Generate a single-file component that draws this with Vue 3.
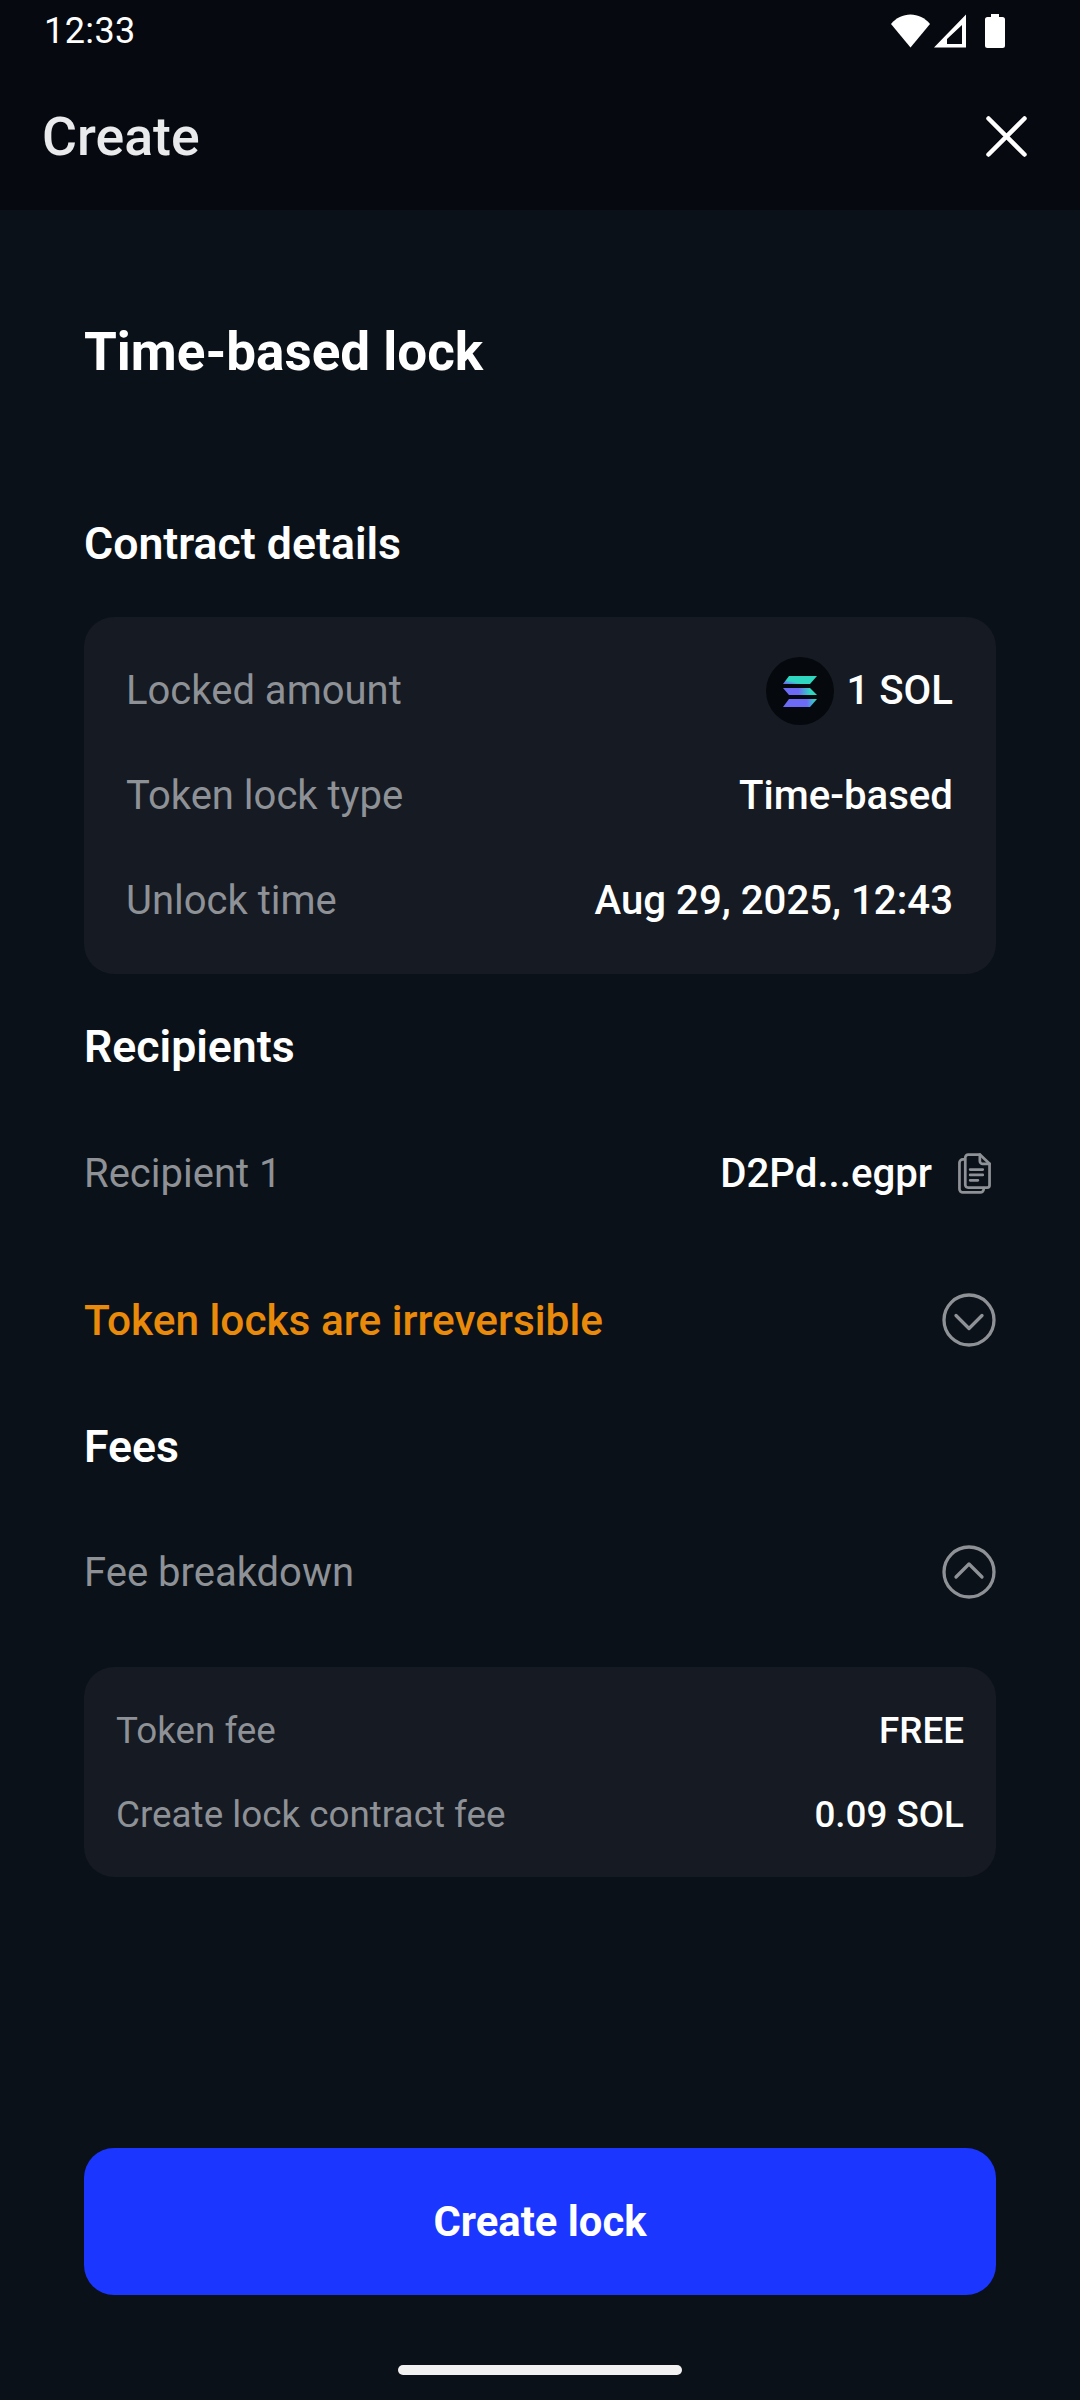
<script setup>
const details = [
  { label: 'Token lock type', value: 'Time-based' },
  { label: 'Unlock time', value: 'Aug 29, 2025, 12:43' },
];

const fees = [
  { label: 'Token fee', value: 'FREE' },
  { label: 'Create lock contract fee', value: '0.09 SOL' },
];
</script>

<template>
  <div class="screen">
    <header class="top">
      <div class="status">
        <span class="clock">12:33</span>
        <div class="status-icons">
          <svg width="39" height="34" viewBox="0 0 39 34"><path d="M19.500 33.500 0 10C5 4 12 .5 19.500 .5S34 4 39 10z" fill="#fff" /></svg>
          <svg class="signal" width="32" height="34" viewBox="0 0 32 34"><path fill-rule="evenodd" d="M32 .5v33H0zM28 11 13 25v5h15z" fill="#fff" /></svg>
          <svg width="20" height="34" viewBox="0 0 20 34"><path d="M6 0h8v3h3.500A2.500 2.500 0 0 1 20 5.500V31.500a2.500 2.500 0 0 1-2.500 2.500H2.500A2.500 2.500 0 0 1 0 31.500V5.500A2.500 2.500 0 0 1 2.500 3H6z" fill="#fff" /></svg>
        </div>
      </div>
      <div class="appbar">
        <span class="appbar-title">Create</span>
        <svg width="41" height="41" viewBox="0 0 41 41"><path d="M2.500 2.500l36 36M38.500 2.500l-36 36" stroke="#fff" stroke-width="4.500" stroke-linecap="round" /></svg>
      </div>
    </header>

    <main class="content">
      <h1>Time-based lock</h1>

      <h2 class="contract-head">Contract details</h2>
      <section class="card contract">
        <div class="row">
          <span class="label">Locked amount</span>
          <span class="value amount">
            <svg class="token" width="68" height="68" viewBox="0 0 68 68">
              <defs>
                <linearGradient id="solTop" x1="0" y1="1" x2="1" y2="0">
                  <stop offset="0.08" stop-color="#6b6bf5" />
                  <stop offset="0.3" stop-color="#2fd7c0" />
                </linearGradient>
                <linearGradient id="solMid" x1="0" y1="0" x2="1" y2="0">
                  <stop offset="0.45" stop-color="#6b6bf5" />
                  <stop offset="0.8" stop-color="#2fd7c0" />
                </linearGradient>
                <linearGradient id="solBot" x1="0" y1="0" x2="1" y2="0">
                  <stop offset="0.7" stop-color="#6b6bf5" />
                  <stop offset="0.95" stop-color="#2fd7c0" />
                </linearGradient>
              </defs>
              <circle cx="34" cy="34" r="34" fill="#05080d" />
              <path d="M23 19h28l-7 8H17z" fill="url(#solTop)" />
              <path d="M17 31h27l7 7H23z" fill="url(#solMid)" />
              <path d="M23 42h28l-7 8H17z" fill="url(#solBot)" />
            </svg>
            1 SOL
          </span>
        </div>
        <div v-for="item in details" :key="item.label" class="row">
          <span class="label">{{ item.label }}</span>
          <span class="value">{{ item.value }}</span>
        </div>
      </section>

      <h2 class="recipients-head">Recipients</h2>
      <div class="line recipient">
        <span class="label">Recipient 1</span>
        <span class="value address">
          D2Pd...egpr
          <svg width="33" height="41" viewBox="0 0 34 42" fill="none" stroke="#8e9196" stroke-width="2.800" stroke-linejoin="round" stroke-linecap="round">
            <path d="M7 6.500H5A3.500 3.500 0 0 0 1.500 10v27A3.500 3.500 0 0 0 5 40.500h18A3.500 3.500 0 0 0 26.500 37v-1" />
            <path d="M10.500 1.500h12L32.500 11v22a2.500 2.500 0 0 1-2.500 2.500H10.500A3 3 0 0 1 7.500 33V4.500a3 3 0 0 1 3-3z" />
            <path d="M22.500 1.500V8a3 3 0 0 0 3 3h7" />
            <path d="M12.500 17h13M12.500 22.500h13M12.500 28h8" />
          </svg>
        </span>
      </div>

      <div class="line warning">
        <span class="warning-text">Token locks are irreversible</span>
        <svg width="54" height="54" viewBox="0 0 54 54" fill="none" stroke="#8e9196" stroke-width="3.300" stroke-linecap="round" stroke-linejoin="round">
          <circle cx="27" cy="27" r="25" />
          <path d="M14 22.500l13 13 13-13" />
        </svg>
      </div>

      <h2 class="fees-head">Fees</h2>
      <div class="line breakdown">
        <span class="label">Fee breakdown</span>
        <svg width="54" height="54" viewBox="0 0 54 54" fill="none" stroke="#8e9196" stroke-width="3.300" stroke-linecap="round" stroke-linejoin="round">
          <circle cx="27" cy="27" r="25" />
          <path d="M14 32l13-13 13 13" />
        </svg>
      </div>

      <section class="card fee-card">
        <div v-for="fee in fees" :key="fee.label" class="fee-row">
          <span class="label small">{{ fee.label }}</span>
          <span class="value small">{{ fee.value }}</span>
        </div>
      </section>

      <button class="submit">Create lock</button>
      <div class="home-bar"></div>
    </main>
  </div>
</template>

<style scoped>
.screen {
  width: 1080px;
  height: 2400px;
  display: flex;
  flex-direction: column;
  background: #0b1118;
  font-family: Roboto, "Liberation Sans", sans-serif;
  color: #fff;
  overflow: hidden;
}

.top {
  height: 210px;
  flex: none;
  background: #060a10;
}

.status {
  height: 63px;
  display: flex;
  align-items: center;
  justify-content: space-between;
  padding: 0 75px 2px 44px;
  box-sizing: border-box;
}

.clock {
  font-size: 36px;
  letter-spacing: 0.4px;
}

.status-icons {
  display: flex;
  align-items: center;
  gap: 19px;
}

.signal {
  margin-left: -15px;
}

.appbar {
  height: 147px;
  display: flex;
  align-items: center;
  justify-content: space-between;
  padding: 0 53px 0 42px;
  box-sizing: border-box;
}

.appbar-title {
  font-size: 53.600px;
  font-weight: 500;
  color: #e9eaec;
}

.content {
  flex: 1;
  display: flex;
  flex-direction: column;
  padding: 0 84px;
}

h1 {
  margin: 110px 0 0;
  font-size: 53px;
  line-height: 64px;
  font-weight: 700;
}

h2 {
  margin: 0;
  font-size: 44.600px;
  line-height: 54px;
  font-weight: 600;
}

.contract-head {
  margin-top: 133px;
}

.card {
  background: #151a23;
  border-radius: 30px;
}

.contract {
  margin-top: 46px;
  height: 357px;
  box-sizing: border-box;
  padding: 21px 43px 21px 42px;
  display: flex;
  flex-direction: column;
}

.row {
  height: 105px;
  display: flex;
  align-items: center;
  justify-content: space-between;
}

.label {
  font-size: 40px;
  color: #8e9196;
}

.value {
  font-size: 40.200px;
  font-weight: 500;
}

.amount {
  display: flex;
  align-items: center;
  gap: 12px;
}

.recipients-head {
  margin-top: 46px;
}

.line {
  display: flex;
  align-items: center;
  justify-content: space-between;
}

.recipient {
  margin-top: 72px;
  height: 54px;
  padding-right: 5px;
}

.address {
  display: flex;
  align-items: center;
  gap: 26px;
}

.warning {
  margin-top: 93px;
  height: 54px;
}

.warning-text {
  font-size: 42.400px;
  font-weight: 500;
  color: #e98a0b;
}

.fees-head {
  margin-top: 73px;
}

.breakdown {
  margin-top: 71px;
  height: 54px;
}

.fee-card {
  margin-top: 68px;
  height: 210px;
  box-sizing: border-box;
  padding: 21px 32px 0;
}

.fee-row {
  height: 84px;
  display: flex;
  align-items: center;
  justify-content: space-between;
}

.small {
  font-size: 36.800px;
}

.submit {
  margin-top: 271px;
  height: 147px;
  flex: none;
  border: none;
  border-radius: 30px;
  background: #1a36ff;
  color: #fff;
  font-family: inherit;
  font-size: 41.800px;
  font-weight: 700;
}

.home-bar {
  align-self: center;
  margin-top: 70px;
  width: 284px;
  height: 10px;
  border-radius: 5px;
  background: #f1f1f1;
}
</style>
